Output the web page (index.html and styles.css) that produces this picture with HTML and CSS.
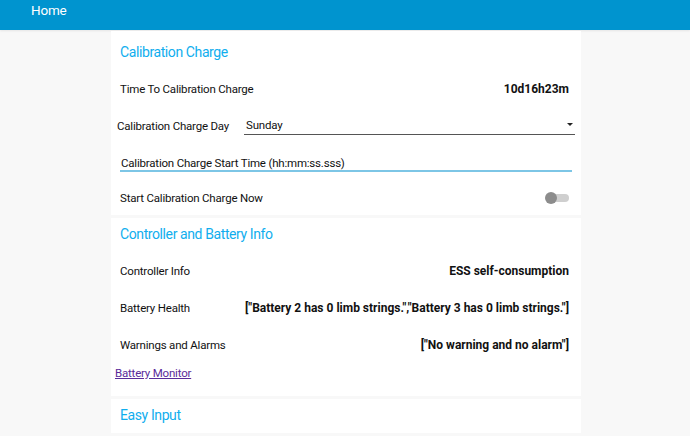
FILE: index.html
```html
<!DOCTYPE html>
<html lang="en">
<head>
    <meta charset="UTF-8">
    <title>Home</title>
    <link rel="stylesheet" href="styles.css">
</head>
<body>
    <div class="topbar">Home</div>

    <div class="page">
        <!-- Calibration -->
        <div class="card first">
            <h3>Calibration Charge</h3>
            <div class="row">
                <span>Time To Calibration Charge</span>
                <span class="value">10d16h23m</span>
            </div>
            <div class="row select-row">
                <label for="calDay">Calibration Charge Day</label>
                <div class="select">
                    <span>Sunday</span>
                    <span class="caret"></span>
                </div>
            </div>
            <div class="row input-row">
                <div class="text-input">Calibration Charge Start Time (hh:mm:ss.sss)</div>
            </div>
            <div class="row toggle-row">
                <span>Start Calibration Charge Now</span>
                <span class="toggle"><span class="thumb"></span></span>
            </div>
        </div>

        <!-- Controller -->
        <div class="card">
            <h3>Controller and Battery Info</h3>
            <div class="row">
                <span>Controller Info</span>
                <span class="value">ESS self-consumption</span>
            </div>
            <div class="row">
                <span>Battery Health</span>
                <span class="value">["Battery 2 has 0 limb strings.","Battery 3 has 0 limb strings."]</span>
            </div>
            <div class="row">
                <span>Warnings and Alarms</span>
                <span class="value">["No warning and no alarm"]</span>
            </div>
            <a class="link" href="#">Battery Monitor</a>
        </div>

        <div class="card">
            <h3>Easy Input</h3>
        </div>
    </div>
</body>
</html>
```

FILE: styles.css
```css
body { margin: 0; background: #f8f8f8; font-family: Roboto, "Liberation Sans", Arial, sans-serif; font-size: 11.5px; letter-spacing: -0.2px; color: #111; }
.topbar { height: 30px; line-height: 21px; padding-left: 31px; background: #0094cf; color: #fff; font-size: 13.5px; letter-spacing: -0.2px; box-shadow: 0 1px 2px rgba(0,0,0,.08); }
.page { width: 470px; margin: 1px 0 0 111px; display: flex; flex-direction: column; gap: 3px; }
.card { background: #fff; padding: 0 12px 0 9px; }
.card.first { padding-top: 5px; }
h3 { margin: 0 0 1px; height: 33px; line-height: 33px; font-size: 14px; letter-spacing: -0.4px; font-weight: normal; color: #10aeee; }
.row { height: 37px; display: flex; align-items: center; justify-content: space-between; }
.value { font-weight: bold; font-size: 12px; letter-spacing: 0; }
.select-row { margin-left: -3px; margin-right: -6px; }
.select { width: 331px; height: 18px; border-bottom: 1px solid #555; display: flex; align-items: center; justify-content: space-between; padding: 0 2px; box-sizing: border-box; }
.caret { width: 0; height: 0; border-left: 3px solid transparent; border-right: 3px solid transparent; border-top: 3px solid #222; margin-bottom: 2px; }
.input-row { align-items: flex-start; padding-top: 12px; height: 25px; margin-right: -3px; }
.text-input { width: 100%; padding: 0 1px; border-bottom: 2px solid #7dc6e6; }
.toggle-row { height: 34px; }
.toggle { position: relative; width: 21px; height: 8px; border-radius: 4px; background: #cfcfcf; }
.thumb { position: absolute; left: -3px; top: -2px; width: 12px; height: 12px; border-radius: 50%; background: #8c8c8c; }
.link { display: block; margin: 2px 0 0 -5px; height: 16px; line-height: 16px; color: #5a2a9a; padding-bottom: 15px; }
```
